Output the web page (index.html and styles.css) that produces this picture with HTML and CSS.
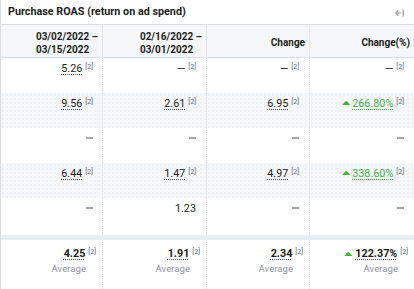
FILE: index.html
```html
<!DOCTYPE html>
<html>
<head>
<meta charset="utf-8">
<link rel="stylesheet" href="styles.css">
</head>
<body>
<div class="panel">
  <div class="title">
    <span>Purchase ROAS (return on ad spend)</span>
    <svg class="collapse" width="9" height="8" viewBox="0 0 9 8"><path d="M0.8 4H6.2M3.2 1.2L0.8 4L3.2 6.8" fill="none" stroke="#9a9da2" stroke-width="1.2"/><path d="M8.2 0.5V7.5" stroke="#9a9da2" stroke-width="1.2"/></svg>
  </div>
  <div class="grid">
    <div class="cell head"><div class="hb">03/02/2022 –<br>03/15/2022</div></div>
    <div class="cell head"><div class="hb">02/16/2022 –<br>03/01/2022</div></div>
    <div class="cell head single"><div class="hb">Change</div></div>
    <div class="cell head single"><div class="hb">Change(%)</div></div>

    <div class="cell c1"><span class="v u">5.26</span><sup>[2]</sup></div>
    <div class="cell"><span class="v">—</span><sup>[2]</sup></div>
    <div class="cell"><span class="v">—</span><sup>[2]</sup></div>
    <div class="cell"><span class="v">—</span><sup>[2]</sup></div>

    <div class="cell c1 alt"><span class="v u">9.56</span><sup>[2]</sup></div>
    <div class="cell alt"><span class="v u">2.61</span><sup>[2]</sup></div>
    <div class="cell alt"><span class="v u">6.95</span><sup>[2]</sup></div>
    <div class="cell alt"><span class="tri"></span><span class="v u up">266.80%</span><sup>[2]</sup></div>

    <div class="cell c1"><span class="dash"></span></div>
    <div class="cell"><span class="dash"></span></div>
    <div class="cell"><span class="dash"></span></div>
    <div class="cell"><span class="dash"></span></div>

    <div class="cell c1 alt"><span class="v u">6.44</span><sup>[2]</sup></div>
    <div class="cell alt"><span class="v u">1.47</span><sup>[2]</sup></div>
    <div class="cell alt"><span class="v u">4.97</span><sup>[2]</sup></div>
    <div class="cell alt"><span class="tri"></span><span class="v u up">338.60%</span><sup>[2]</sup></div>

    <div class="cell c1 last"><span class="dash"></span></div>
    <div class="cell last"><span class="v">1.23</span></div>
    <div class="cell last"><span class="dash"></span></div>
    <div class="cell last"><span class="dash"></span></div>
  </div>
  <div class="band"></div>
  <div class="grid foot">
    <div class="fcell"><div class="fv"><span class="v b u">4.25</span><sup>[2]</sup></div><div class="avg">Average</div></div>
    <div class="fcell"><div class="fv"><span class="v b u">1.91</span><sup>[2]</sup></div><div class="avg">Average</div></div>
    <div class="fcell"><div class="fv"><span class="v b u">2.34</span><sup>[2]</sup></div><div class="avg">Average</div></div>
    <div class="fcell"><div class="fv"><span class="tri"></span><span class="v b u">122.37%</span><sup>[2]</sup></div><div class="avg">Average</div></div>
  </div>
</div>
</body>
</html>
```
FILE: styles.css
```css
html, body {
  margin: 0;
  padding: 0;
  background: #fff;
}
body {
  font-family: Roboto, "Liberation Sans", sans-serif;
  color: #1c1e21;
  width: 414px;
  height: 289px;
  overflow: hidden;
}
.panel {
  border-left: 1px solid #d8dbdf;
  height: 289px;
  box-sizing: border-box;
}
.title {
  height: 25px;
  display: flex;
  align-items: center;
  justify-content: space-between;
  padding: 0 10px 1px 7px;
  font-size: 10.8px;
  font-weight: 700;
  border-bottom: 1px solid #dadde1;
  box-sizing: border-box;
}
.collapse {
  margin-top: 2px;
}
.grid {
  display: grid;
  grid-template-columns: 102px 104px 103px 104px;
}
.cell {
  height: 35px;
  box-sizing: border-box;
  padding: 4px 10px 0 4px;
  display: flex;
  justify-content: flex-end;
  align-items: flex-start;
  font-size: 10.8px;
  line-height: 14px;
  border-right: 1px dotted #dcdfe3;
}
.cell.c1 {
  padding-right: 9px;
}
.grid > :nth-child(4n) {
  border-right: none;
}
.head {
  height: 33px;
  background: #f5f6f7;
  font-weight: 700;
  font-size: 10px;
  line-height: 13px;
  padding: 5px 4px 0 4px;
  border-bottom: 1px solid #dadde1;
  border-right: 1px solid #e3e5e8;
}
.head.single {
  padding-top: 11px;
}
.hb {
  text-align: left;
}
.alt {
  background-color: #f6f7f8;
  background-image: radial-gradient(circle, #eceef0 0.6px, transparent 0.9px);
  background-size: 4px 4px;
}
.last {
  height: 37px;
}
.v {
  color: #1c1e21;
}
.u {
  text-decoration: underline dotted #4b4f56;
  text-underline-offset: 2px;
}
.up {
  color: #42b03f;
  text-decoration-color: #42b03f;
}
.dash {
  display: block;
  width: 7px;
  height: 2px;
  background: #a2a5aa;
  margin-top: 5px;
}
sup {
  font-size: 7px;
  color: #606770;
  line-height: 10px;
  vertical-align: top;
  margin-left: 3px;
}
.tri {
  display: block;
  width: 8px;
  height: 4px;
  background: #44b33f;
  clip-path: polygon(0 100%, 38% 10%, 50% 0, 62% 10%, 100% 100%);
  margin: 4px 2px 0 0;
}
.band {
  height: 5px;
  background: #e8edf4;
}
.fcell {
  height: 49px;
  box-sizing: border-box;
  padding: 7px 6px 0 4px;
  display: flex;
  flex-direction: column;
  align-items: flex-end;
  border-right: 1px dotted #dcdfe3;
}
.fv {
  display: flex;
  align-items: flex-start;
  font-size: 10.8px;
  line-height: 14px;
}
.fv .tri {
  margin-top: 5px;
  margin-right: 3px;
}
.b {
  font-weight: 700;
}
.avg {
  color: #90949c;
  font-size: 9.6px;
  line-height: 14px;
  margin-top: 1px;
  padding-right: 10px;
}
```
